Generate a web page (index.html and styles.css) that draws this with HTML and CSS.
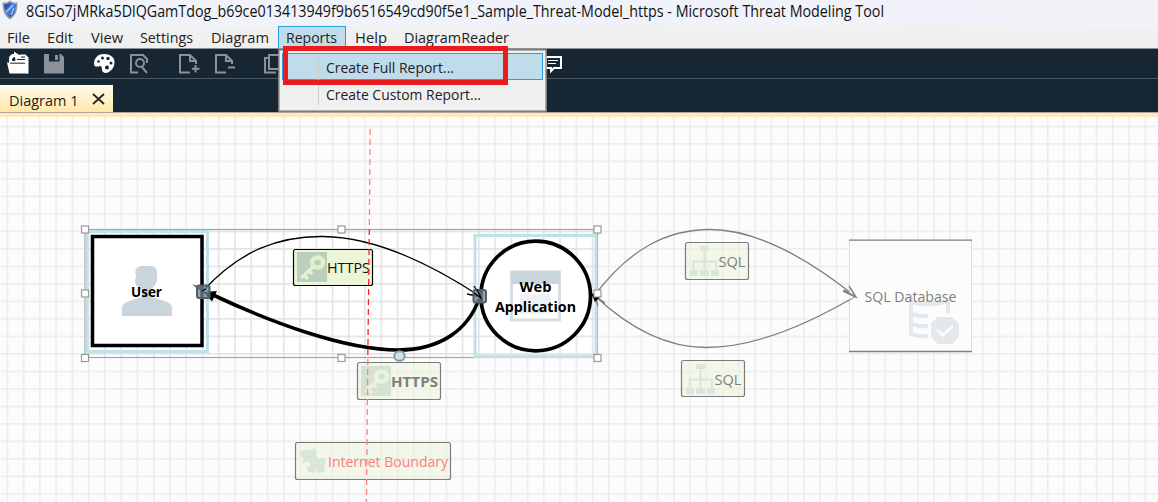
FILE: index.html
```html
<!DOCTYPE html>
<html lang="en">
<head>
<meta charset="utf-8">
<title>Microsoft Threat Modeling Tool</title>
<link rel="stylesheet" href="styles.css">
</head>
<body>
<div class="app">
  <header class="titlebar">
    <svg class="app-icon" width="16" height="20" viewBox="0 0 16 20">
      <defs><linearGradient id="shield" x1="0" y1="0" x2="1" y2="1"><stop offset="0" stop-color="#0d2f8d"/><stop offset=".5" stop-color="#4b83e6"/><stop offset="1" stop-color="#0b2b86"/></linearGradient></defs>
      <path d="M8 .5C6 2.500 3 3 .6 2.600C.6 10 2 16 8 19.500C14 16 15.600 10 15.400 2.600C13 3 10 2.500 8 .5Z" fill="#8e99a8"/>
      <path d="M8 2.500C6.300 3.800 4 4.500 2.300 4.300C2.500 10 3.500 14.500 8 17.400C12.500 14.500 13.600 10 13.700 4.300C12 4.500 9.700 3.800 8 2.500Z" fill="url(#shield)"/>
      <path d="M4 12L11 5M9 15L12 8" stroke="#a5c5fb" stroke-width="1.500" fill="none"/>
    </svg>
    <svg class="title" width="1120" height="26"><text x="0" y="17" textLength="858" lengthAdjust="spacingAndGlyphs">8GlSo7jMRka5DlQGamTdog_b69ce013413949f9b6516549cd90f5e1_Sample_Threat-Model_https - Microsoft Threat Modeling Tool</text></svg>
  </header>
  <nav class="menubar">
    <svg width="1158" height="22">
      <rect class="menu-active" x="278.500" y=".5" width="67" height="23"/>
      <text x="7" y="17" textLength="23" lengthAdjust="spacingAndGlyphs">File</text>
      <text x="47" y="17" textLength="26" lengthAdjust="spacingAndGlyphs">Edit</text>
      <text x="91" y="17" textLength="32" lengthAdjust="spacingAndGlyphs">View</text>
      <text x="140" y="17" textLength="53" lengthAdjust="spacingAndGlyphs">Settings</text>
      <text x="211" y="17" textLength="58" lengthAdjust="spacingAndGlyphs">Diagram</text>
      <text x="286" y="17" textLength="51" lengthAdjust="spacingAndGlyphs">Reports</text>
      <text x="355" y="17" textLength="32" lengthAdjust="spacingAndGlyphs">Help</text>
      <text x="404" y="17" textLength="105" lengthAdjust="spacingAndGlyphs">DiagramReader</text>
    </svg>
  </nav>
  <div class="toolbar">
    <svg width="580" height="29" viewBox="0 49 580 29">
      <g fill="#fff">
        <path d="M9 59C9 56 11 54 14 54V51.500L20 55.500L15 59V57C13 57 12 58 12 61H25L27.500 73.500H9.500L7 62.500H9Z"/>
        <path d="M16 57L20 54.500H25.500L28.500 57.500V73.500H26L24 61H15Z"/>
        <path d="M10 63.200H25M17 59.500H25M21 57H25" stroke="#172633" fill="none"/>
        <path d="M104 54C97 54 94 59 94 64C94 67 97 67 100 66C103 66 101 70 103 72C107 75 114.500 70 114.500 62C114.500 57 110 54 104 54Z"/>
      </g>
      <g fill="#172633"><circle cx="98.500" cy="61.500" r="1.300"/><circle cx="102.500" cy="58" r="1.500"/><circle cx="108" cy="58.500" r="1.700"/><circle cx="111" cy="63" r="1.500"/><circle cx="107" cy="67.500" r="2"/></g>
      <path fill="#8b9299" fill-rule="evenodd" d="M44 54H61L64 57V73.500H44ZM49 54V61.500H59.500V54ZM55 55H58V60H55Z"/>
      <g fill="none" stroke="#8b9299" stroke-width="2">
        <path d="M138 72.500H131V55H143L147 59V63M142 67L147 73"/><circle cx="140" cy="63" r="4"/>
        <path d="M190 72.500H180V55H190L196 61V64M190 55V61H196M195.500 65V72.500M192 68.700H199.500"/>
        <path d="M226 72.500H216V55H226L232 61V64M226 55V61H232M228 67.500H235"/>
        <path d="M269 58H265V72.500H276M269 55H282V69H269Z"/>
      </g>
      <path d="M546 57H561V68H554L551 71V68H546Z" fill="none" stroke="#fff" stroke-width="2"/>
      <path d="M548 60.500H558M548 63.500H556" stroke="#fff"/>
    </svg>
  </div>
  <div class="tabs"><div class="tab">
    <svg width="113" height="27"><text x="9" y="21" textLength="69.500" lengthAdjust="spacingAndGlyphs">Diagram 1</text><path d="M93 9L104 19M104 9L93 19" stroke="#222" stroke-width="1.700"/></svg>
  </div></div>
  <main class="canvas">
    <svg width="1158" height="385" viewBox="0 117 1158 385">
      <defs>
        <pattern id="grid" x="6.600" y="125.600" width="16.255" height="17.500" patternUnits="userSpaceOnUse"><path d="M.8 0V17.500M0 .8H16.255" stroke="#ececec" stroke-width="1.500"/></pattern>
        <pattern id="grid-selected" x="6.600" y="125.600" width="16.255" height="17.500" patternUnits="userSpaceOnUse"><path d="M.8 0V17.500M0 .8H16.255" stroke="#e0e0e0" stroke-width="1.400"/></pattern>
        <filter id="soft"><feGaussianBlur stdDeviation=".6"/></filter>
        <g id="key"><rect width="30" height="30" fill="#bacfbd"/><g stroke="#e3f0d0" fill="none"><ellipse cx="20.500" cy="10.500" rx="5.500" ry="5" stroke-width="4.500"/><path d="M17 14L4 26M7 23L11 27M12 19L15 22" stroke-width="3.500"/></g></g>
        <g id="tree" fill="#dae5dc"><rect x="10" width="9" height="5"/><rect y="24" width="8" height="6"/><rect x="10" y="24" width="9" height="6"/><rect x="21" y="24" width="8" height="6"/><path d="M14.500 5V24M3.500 24V15.500H26V24" stroke="#dae5dc" stroke-width="2" fill="none"/></g>
        <rect id="handle" x="-3.500" y="-3.500" width="7" height="7" fill="#fff" stroke="#999" stroke-width="1.200"/>
      </defs>
      <rect y="117" width="1158" height="385" fill="#fcfcfc"/><rect y="117" width="1158" height="385" fill="url(#grid)"/>
      <rect x="85" y="229.500" width="512.500" height="128" fill="#fff"/><rect x="85" y="229.500" width="512.500" height="128" fill="url(#grid-selected)" stroke="#a5a5a5" stroke-width="1.200"/>
      <g fill="none" stroke="#bfe1ea" stroke-width="3"><rect x="87" y="231.500" width="120.500" height="120"/><rect x="475" y="235.500" width="121" height="121"/></g>
      <rect x="92.500" y="236.500" width="109.500" height="109" fill="#fff" stroke="#000" stroke-width="3.500"/>
      <g fill="#c9d5da" filter="url(#soft)"><path d="M136 276C134 270 137 266 142 266H150C156 266 158 270 157 276V281C156 285 152 288 151 290V297C160 300 172 301 172 308V316H122V308C122 301 134 300 142 297V290C138 288 135 285 135 281Z"/></g>
      <circle cx="535.700" cy="296" r="54.800" fill="#fff" stroke="#000" stroke-width="3.700"/>
      <g filter="url(#soft)"><rect x="511.500" y="272" width="48" height="48" fill="none" stroke="#d5e0e4" stroke-width="3"/><path d="M511 271H560V284H511Z" fill="#c9d5da"/><rect x="520" y="294" width="31" height="20" fill="#eef2f4"/></g>
      <path d="M203 291C240 250 280 236 323 236.500C370 237 425 260 481 297M474 286L481 297L467 294" fill="none" stroke="#000" stroke-width="1.300"/>
      <path d="M479 299C468 330 440 350 398 350C345 350 270 322 211 294" fill="none" stroke="#000" stroke-width="3.600"/>
      <path d="M203 292L217 291L212 301.500ZM192 284L204 289V293Z"/>
      <g fill="#708995" fill-opacity=".75" stroke="#555e62" stroke-width="2"><rect x="197" y="285.500" width="12.500" height="12.500" rx="2"/><rect x="473.500" y="290" width="12.500" height="12.500" rx="2"/></g>
      <path d="M202 291L206 289M474 293L481 298L477 289" stroke="#000" fill="none" stroke-width="1.200"/>
      <g fill="none" stroke="#7f7f7f" stroke-width="1.300"><path d="M594 296C630 248 668 229.500 710 229.500C755 229.500 806 257 856 297M856 296C800 329 750 347.500 706 347.500C668 347.500 632 331 594 295M605 303L594 295L598 306"/></g>
      <path d="M591 293L600 297L595 302Z"/>
      <g stroke="#000" stroke-width="1.200"><rect x="293.500" y="249.500" width="79" height="36" rx="2" fill="#ebf5d8"/><g opacity=".5"><rect x="357.500" y="362.500" width="83" height="37" rx="2" fill="#ebf3d8"/><rect x="685.500" y="242.500" width="63" height="37" rx="2" fill="#ebf3d8"/><rect x="681.500" y="360.500" width="63" height="36" rx="2" fill="#ebf3d8"/><rect x="295.500" y="442.500" width="155" height="37" rx="2" fill="#ebf3d8"/></g></g>
      <use href="#key" x="297" y="252" filter="url(#soft)"/><use href="#key" x="361" y="366" opacity=".5" filter="url(#soft)"/>
      <use href="#tree" x="690" y="246" filter="url(#soft)"/><use href="#tree" x="686" y="364" filter="url(#soft)"/>
      <path d="M301 451L306 449L309 451L314 448L317 451L316 456L319 459L323 457L326 461L324 465L325 472L319 473L315 470L314 473L308 472L307 467L311 465L308 461L301 464L304 459L300 456Z" fill="#dae5dc" filter="url(#soft)"/>
      <rect x="849" y="240" width="122.500" height="112" fill="#fcfcfc"/><path d="M849.500 240V352M971.500 240V352" stroke="#ddd"/><path d="M849 240.200H972M849 351.500H972" stroke="#7f7f7f" stroke-width="1.300"/>
      <path d="M843 291L856 297L849 286M844 290L856 297" fill="none" stroke="#7f7f7f" stroke-width="1.400"/><path d="M856 296L848 301" stroke="#7f7f7f"/>
      <g filter="url(#soft)" fill="none" stroke="#e2e8eb" stroke-width="4"><path d="M911 298V334Q918 337 928 336M911 302Q930 307 948 301V313M911 314Q919 317 928 316M911 324Q919 327 928 326"/><path d="M937 317H952L959 324V337L952 344H938L931 337V324Z" fill="#e2e8eb" stroke="none"/><path d="M937 330L943 335L953 326" stroke="#fcfcfc" stroke-width="2.500"/></g>
      <g class="diagram-labels">
        <text class="bold" x="131" y="297" textLength="31" lengthAdjust="spacingAndGlyphs">User</text><text class="bold" x="519.500" y="292" textLength="32" lengthAdjust="spacingAndGlyphs">Web</text><text class="bold" x="495" y="312" textLength="81" lengthAdjust="spacingAndGlyphs">Application</text>
        <text x="327" y="273" textLength="43" lengthAdjust="spacingAndGlyphs">HTTPS</text>
        <text class="bold muted" x="391" y="387" textLength="47" lengthAdjust="spacingAndGlyphs">HTTPS</text><text class="muted" x="718.500" y="267" textLength="27" lengthAdjust="spacingAndGlyphs">SQL</text><text class="muted" x="714.500" y="385" textLength="27" lengthAdjust="spacingAndGlyphs">SQL</text><text class="muted" x="864.500" y="302" textLength="92" lengthAdjust="spacingAndGlyphs">SQL Database</text><text class="boundary" x="328" y="467" textLength="120" lengthAdjust="spacingAndGlyphs">Internet Boundary</text>
      </g>
      <g stroke-width="1.300" stroke-dasharray="6 4"><path d="M370.200 129L369.300 229M367.800 359L366.500 502" stroke="#ff8080"/><path d="M369.300 229L367.800 359" stroke="#f22"/></g>
      <use href="#handle" x="85" y="229.500"/><use href="#handle" x="341.500" y="229.500"/><use href="#handle" x="597.500" y="229.500"/><use href="#handle" x="85" y="293.500"/><use href="#handle" x="597.500" y="293.500"/><use href="#handle" x="85" y="358"/><use href="#handle" x="341.500" y="358"/><use href="#handle" x="597.500" y="358"/>
      <ellipse cx="399.500" cy="356" rx="5.200" ry="4.800" fill="#cfe3ec" stroke="#8f999e" stroke-width="2"/>
    </svg>
  </main>
  <div class="dropdown">
    <svg width="269" height="63" viewBox="278 49 269 63">
      <rect x="279" y="50" width="267" height="61" fill="#f0f0f0" stroke="#999" stroke-width="1.500"/><rect x="282.500" y="53.500" width="260" height="26" fill="#c0dceb" stroke="#26a0da"/><path d="M318.500 55V105" stroke="#ccc"/>
      <text x="326" y="73" textLength="128" lengthAdjust="spacingAndGlyphs">Create Full Report...</text><text x="326" y="100" textLength="155" lengthAdjust="spacingAndGlyphs">Create Custom Report...</text>
    </svg>
  </div>
  <div class="highlight"></div>
</div>
</body>
</html>
```
FILE: styles.css
```css
* { box-sizing: border-box; }
body { margin: 0; overflow: hidden; font-family: "Open Sans", "Noto Sans", sans-serif; }
svg { display: block; }
text { font-size: 15px; fill: #222; }
.app { position: relative; width: 1158px; height: 502px; display: flex; flex-direction: column; background: #172633; }
.titlebar { height: 26px; flex: none; display: flex; align-items: flex-start; padding-left: 2px; gap: 8px; background: linear-gradient(90deg, #eff4f9, #f0f2fb 50%, #f2f2f8); }
.app-icon, .title { flex: none; }
.title text { font-size: 15.5px; fill: #111; }
.menubar { height: 23px; flex: none; background: #f0f0f0; border-bottom: 1px solid #8a9298; }
.menu-active { fill: #c0dceb; stroke: #26a0da; }
.toolbar { height: 30px; flex: none; border-bottom: 1px solid #4c5962; }
.tabs { height: 38px; flex: none; padding-top: 6px; border-bottom: 4px solid #ffe9b8; box-shadow: inset 0 -1px #aaa69c; }
.tab { width: 113px; height: 27px; background: linear-gradient(#fffaf0, #ffe8a8); }
.canvas { height: 385px; flex: none; }
.diagram-labels text { fill: #111; }
.diagram-labels .bold { font-weight: 700; fill: #000; }
.diagram-labels .muted { fill: #7d7f7d; }
.diagram-labels .boundary { fill: #ff7d7d; }
.dropdown { position: absolute; left: 278px; top: 49px; }
.highlight { position: absolute; left: 283px; top: 46px; width: 225px; height: 39px; border: 5px solid #e81b1f; }
```
